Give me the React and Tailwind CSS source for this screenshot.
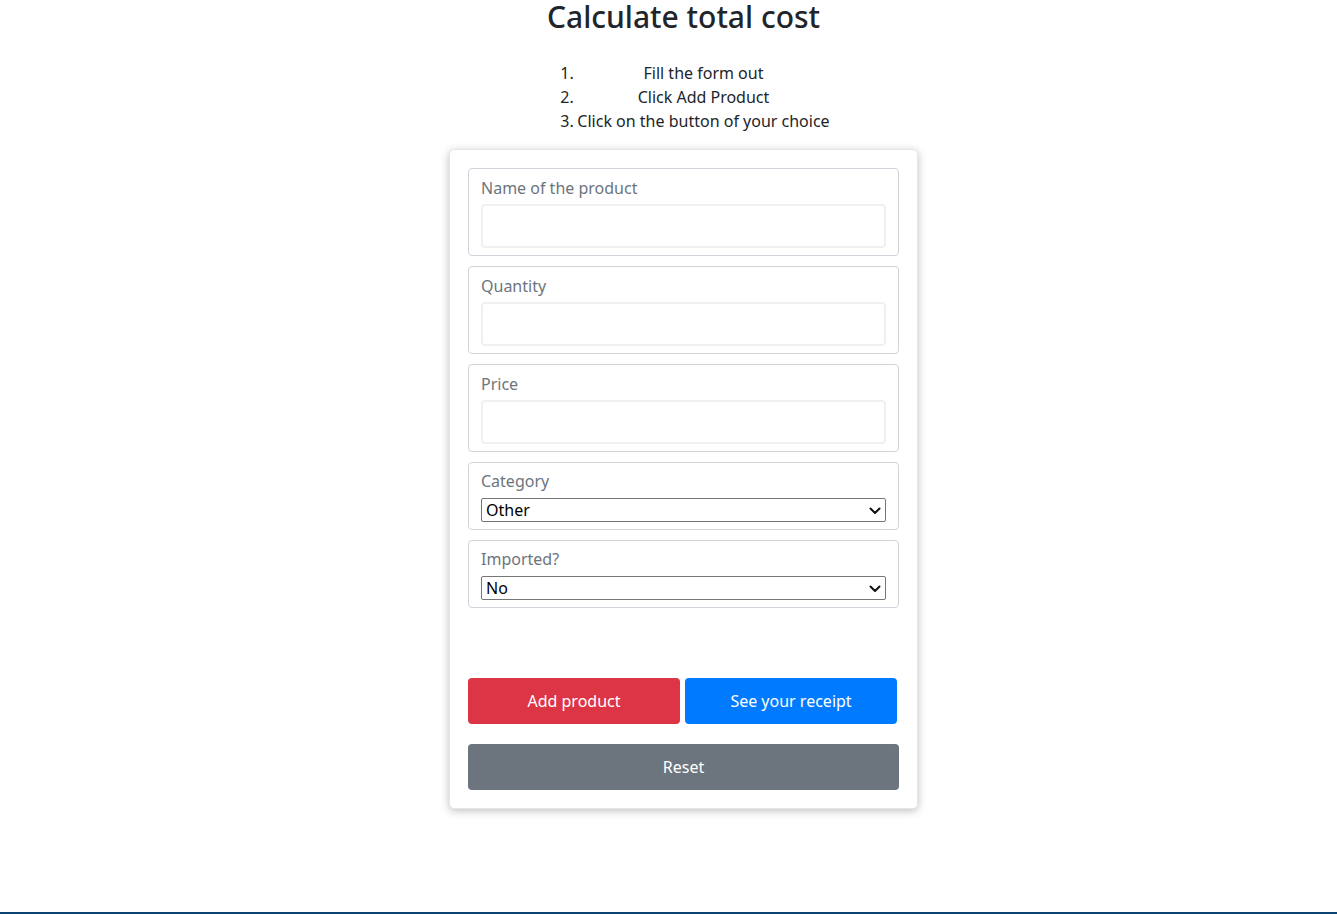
import React from "react";

const font = { fontFamily: '"Segoe UI", "Noto Sans", "Open Sans", sans-serif' };

function Chevron() {
  return (
    <svg width="12" height="8" viewBox="0 0 12 8" className="absolute right-[4px] top-[8px]">
      <path d="M1.5 1.5 L6 6 L10.5 1.5" fill="none" stroke="#111" strokeWidth="2" strokeLinecap="round" strokeLinejoin="round" />
    </svg>
  );
}

function InputField({ label }) {
  return (
    <fieldset className="border border-[#ced4da] rounded-[4px] pt-[7px] pb-[7px] px-[12px]">
      <div className="text-[16px] leading-[24px] text-[#6c757d] mb-[4px]">{label}</div>
      <div className="h-[44px] border-2 border-[#eef0f2] rounded-[4px] bg-white"></div>
    </fieldset>
  );
}

function SelectField({ label, value }) {
  return (
    <fieldset className="border border-[#ced4da] rounded-[4px] pt-[6px] pb-[7px] px-[12px]">
      <div className="text-[16px] leading-[24px] text-[#6c757d] mb-[5px]">{label}</div>
      <div className="relative h-[24px] border border-[#767676] rounded-[2px] bg-white pl-[4px] text-[16px] leading-[22px] text-black">
        {value}
        <Chevron />
      </div>
    </fieldset>
  );
}

export default function App() {
  return (
    <div className="min-h-[914px] flex flex-col bg-white text-[#212529]" style={font}>
      <div className="flex-1 flex flex-col items-center pl-[30px]">
        <h1 className="text-[30px] leading-[34px] font-medium mt-0 pt-0">Calculate total cost</h1>
        <div className="mt-[27px] pl-[23px] text-[16px] leading-[24px]">
          <div className="flex">
            <span className="w-[17px]">1.</span>
            <span className="flex-1 text-center">Fill the form out</span>
          </div>
          <div className="flex">
            <span className="w-[17px]">2.</span>
            <span className="flex-1 text-center">Click Add Product</span>
          </div>
          <div className="flex">
            <span className="w-[17px]">3.</span>
            <span>Click on the button of your choice</span>
          </div>
        </div>
        <div className="mt-[16px] w-[469px] bg-white border border-[#e6e6e6] rounded-[5px] shadow-[0_2px_8px_rgba(0,0,0,0.25)] p-[18px]">
          <div className="flex flex-col gap-[10px]">
            <InputField label="Name of the product" />
            <InputField label="Quantity" />
            <InputField label="Price" />
            <SelectField label="Category" value="Other" />
            <SelectField label="Imported?" value="No" />
          </div>
          <div className="mt-[70px] flex gap-[5px] w-[429px]">
            <button className="flex-1 h-[46px] rounded-[4px] bg-[#dc3545] text-white text-[16px]">Add product</button>
            <button className="flex-1 h-[46px] rounded-[4px] bg-[#007bff] text-white text-[16px]">See your receipt</button>
          </div>
          <button className="mt-[20px] w-full h-[46px] rounded-[4px] bg-[#6c757d] text-white text-[16px]">Reset</button>
        </div>
      </div>
      <div className="h-[2px] bg-[#0b4470]"></div>
    </div>
  );
}
